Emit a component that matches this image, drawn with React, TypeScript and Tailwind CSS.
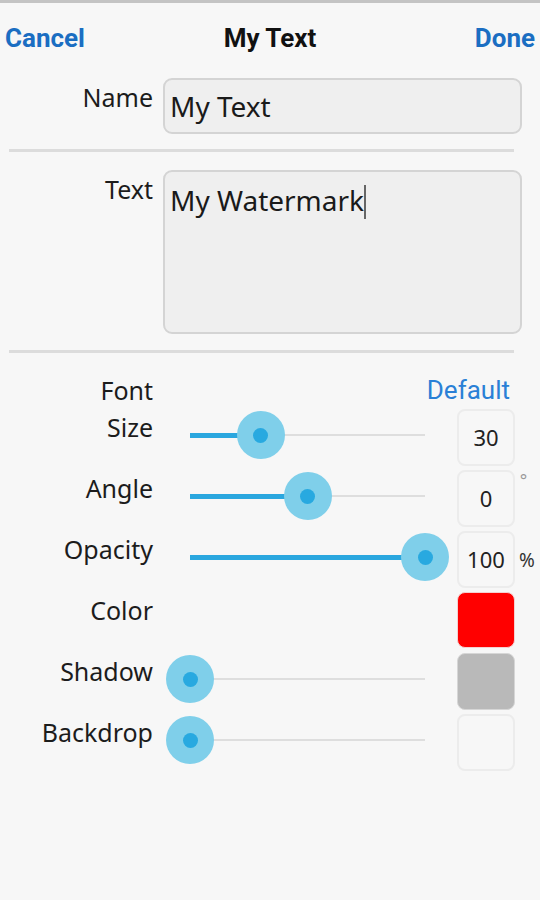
import React from "react";

const label = "font-['Noto_Sans',sans-serif] text-[25px] leading-[30px] text-[#1c1c1c]";

function Slider({ value }: { value: number }) {
  // track runs 190..425 on the page, thumb radius 24
  return (
    <div className="relative h-[48px] w-[283px] ml-[13px] mt-[2px]">
      <div className="absolute left-[24px] right-[24px] top-[23px] h-[2px] bg-[#dedede]" />
      <div
        className="absolute left-[24px] top-[22px] h-[5px] bg-[#2aa7df]"
        style={{ width: `${value * 235}px` }}
      />
      <div
        className="absolute top-0 w-[48px] h-[48px] rounded-full bg-[#7fcfea] flex items-center justify-center"
        style={{ left: `${value * 235}px` }}
      >
        <div className="w-[15px] h-[15px] rounded-full bg-[#28a9e0]" />
      </div>
    </div>
  );
}

function ValueBox({ children }: { children?: React.ReactNode }) {
  return (
    <div className="w-[58px] h-[57px] rounded-[8px] border-2 border-[#ececec] bg-[#f7f7f7] flex items-center justify-center font-['Noto_Sans',sans-serif] text-[22px] text-[#222]">
      {children}
    </div>
  );
}

function Row({
  name,
  slider,
  box,
  unit,
}: {
  name: string;
  slider?: number;
  box: React.ReactNode;
  unit?: React.ReactNode;
}) {
  return (
    <div className="flex items-start h-[57px] mb-[4px]">
      <div className={`w-[153px] text-right pt-[3px] ${label}`}>{name}</div>
      <div className="w-[304px]">{slider !== undefined && <Slider value={slider} />}</div>
      {box}
      <div className="w-[25px] pl-[4px]">{unit}</div>
    </div>
  );
}

export default function App() {
  return (
    <div className="w-[540px] h-[900px] bg-[#f7f7f7] border-t-[3px] border-[#c4c4c4] font-['Roboto',sans-serif]">
      <div className="flex items-center h-[68px] pl-[5px] pr-[5px] pt-[2px]">
        <span className="flex-1 text-[26px] font-bold text-[#1b6ec2]">Cancel</span>
        <span className="text-[26px] font-bold text-[#111]">My Text</span>
        <span className="flex-1 text-right text-[26px] font-bold text-[#1b6ec2]">Done</span>
      </div>

      <div className="flex items-start mt-[7px]">
        <div className={`w-[153px] text-right pt-[4px] ${label}`}>Name</div>
        <div className="ml-[10px] w-[359px] h-[56px] rounded-[9px] border-2 border-[#d4d4d4] bg-[#efefef] flex items-center pl-[5px] font-['Noto_Sans',sans-serif] text-[28px] text-[#1a1a1a]">
          My Text
        </div>
      </div>

      <div className="ml-[9px] w-[505px] h-[3px] bg-[#dcdcdc] mt-[15px]" />

      <div className="flex items-start mt-[18px]">
        <div className={`w-[153px] text-right pt-[4px] ${label}`}>Text</div>
        <div className="ml-[10px] w-[359px] h-[164px] rounded-[9px] border-2 border-[#d4d4d4] bg-[#efefef] pl-[5px] pt-[10px] font-['Noto_Sans',sans-serif] text-[28px] leading-[36px] text-[#1a1a1a]">
          My Watermark
          <span className="inline-block w-[2px] h-[34px] bg-[#666] align-[-8px]" />
        </div>
      </div>

      <div className="ml-[9px] w-[505px] h-[3px] bg-[#dcdcdc] mt-[16px]" />

      <div className="flex items-center h-[30px] mt-[22px] mb-[4px]">
        <div className={`w-[153px] text-right ${label}`}>Font</div>
        <div className="flex-1 text-right pr-[30px] text-[26px] text-[#2a80d6]">Default</div>
      </div>

      <Row name="Size" slider={0.3} box={<ValueBox>30</ValueBox>} />
      <Row
        name="Angle"
        slider={0.5}
        box={<ValueBox>0</ValueBox>}
        unit={<span className="block font-['DejaVu_Sans',sans-serif] text-[18px] leading-[18px] text-[#999] mt-[2px]">°</span>}
      />
      <Row
        name="Opacity"
        slider={1}
        box={<ValueBox>100</ValueBox>}
        unit={<span className="block font-['Noto_Sans',sans-serif] text-[19px] text-[#333] mt-[15px]">%</span>}
      />
      <Row
        name="Color"
        box={<div className="w-[58px] h-[56px] rounded-[8px] bg-[#ff0000] border border-[#f4d0d0]" />}
      />
      <Row
        name="Shadow"
        slider={0}
        box={<div className="w-[58px] h-[57px] rounded-[8px] bg-[#b9b9b9] border border-[#d6d6d6]" />}
      />
      <Row name="Backdrop" slider={0} box={<ValueBox />} />
    </div>
  );
}
